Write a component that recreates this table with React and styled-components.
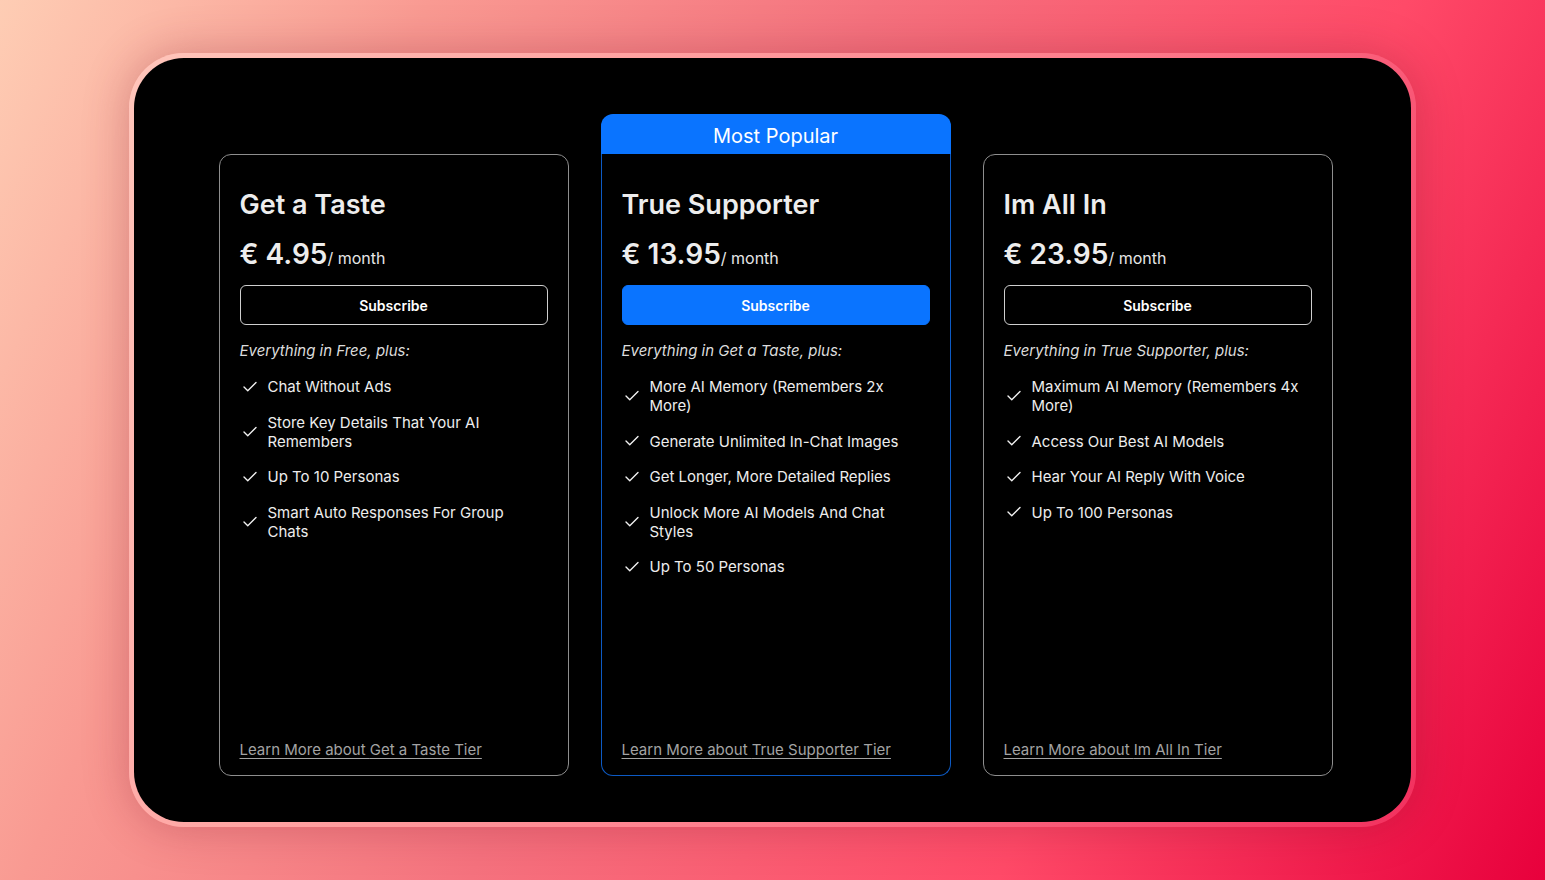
import React from "react";
import styled, { createGlobalStyle } from "styled-components";

const Global = createGlobalStyle`
  * { box-sizing: border-box; }
  html, body { margin: 0; padding: 0; }
  body {
    font-family: Inter, "Noto Sans", "Liberation Sans", sans-serif;
    -webkit-font-smoothing: antialiased;
  }
`;

const Page = styled.div`
  width: 100vw;
  height: 100vh;
  min-height: 880px;
  display: flex;
  align-items: center;
  justify-content: center;
  background: linear-gradient(115deg, #fecdb4 0%, #f99a92 22%, #f5727e 45%, #ff4a68 72%, #e8003c 100%);
  overflow: hidden;
`;

const Frame = styled.div`
  width: 1287px;
  height: 774px;
  padding: 5px;
  border-radius: 55px;
  background: linear-gradient(115deg, #ffc6bb 0%, #ffa3a2 30%, #ff7c8c 60%, #f2305e 100%);
  box-shadow: 0 0 46px rgba(130, 20, 40, 0.3);
`;

const Panel = styled.div`
  width: 100%;
  height: 100%;
  background: #000;
  border-radius: 50px;
  display: flex;
  justify-content: center;
  padding: 56px 0 46px 6px;
`;

const Grid = styled.div`
  display: grid;
  grid-template-columns: repeat(3, 350px);
  grid-template-rows: 40px 1fr;
  column-gap: 32px;
  height: 100%;
`;

const Badge = styled.div`
  grid-column: 2;
  grid-row: 1;
  background: #0a74ff;
  border-radius: 12px 12px 0 0;
  color: #fff;
  font-size: 20px;
  display: flex;
  align-items: center;
  justify-content: center;
  padding-top: 3px;
`;

const Card = styled.div`
  grid-row: 2;
  border: 1px solid ${(p) => (p.$popular ? "#0d5ac4" : "#8e8e8e")};
  border-top: ${(p) => (p.$popular ? "none" : "1px solid #8e8e8e")};
  border-radius: ${(p) => (p.$popular ? "0 0 12px 12px" : "12px")};
  padding: ${(p) => (p.$popular ? "34px" : "33px")} 20px 16px;
  display: flex;
  flex-direction: column;
  color: #f3f3f3;
`;

const Title = styled.h2`
  margin: 0;
  font-size: 27px;
  line-height: 34px;
  font-weight: 600;
  color: #ededed;
`;

const Price = styled.div`
  margin-top: 15px;
  line-height: 34px;
  display: flex;
  align-items: baseline;
`;

const Amount = styled.span`
  font-size: 28px;
  font-weight: 600;
  color: #ededed;
`;

const Per = styled.span`
  font-size: 16px;
  color: #e6e6e6;
`;

const Button = styled.button`
  margin-top: 10px;
  height: 40px;
  width: 100%;
  border-radius: 6px;
  border: 1px solid ${(p) => (p.$primary ? "#0a74ff" : "#cfcfcf")};
  background: ${(p) => (p.$primary ? "#0a74ff" : "#000")};
  color: #fff;
  font-family: inherit;
  font-size: 14px;
  font-weight: 600;
  cursor: pointer;
`;

const Lead = styled.p`
  margin: 16px 0 0;
  font-size: 15px;
  line-height: 19px;
  font-style: italic;
  color: #dcdcdc;
`;

const List = styled.ul`
  list-style: none;
  margin: 17px 0 0;
  padding: 0;
  display: flex;
  flex-direction: column;
  gap: 16.5px;
`;

const Item = styled.li`
  display: flex;
  align-items: center;
  gap: 9px;
  font-size: 15px;
  line-height: 19px;
  color: #ededed;
  padding-left: 1px;
`;

const Learn = styled.a`
  margin-top: auto;
  font-size: 15px;
  line-height: 19px;
  color: #a3a3a3;
  text-decoration: underline;
  text-underline-offset: 3px;
  text-decoration-thickness: 1px;
`;

const Check = () => (
  <svg width="18" height="18" viewBox="0 0 24 24" fill="none" stroke="#f2f2f2" strokeWidth="1.8" strokeLinecap="round" strokeLinejoin="round" style={{ flexShrink: 0 }}>
    <path d="M20 6 9 17l-5-5" />
  </svg>
);

const plans = [
  {
    name: "Get a Taste",
    price: "4.95",
    lead: "Everything in Free, plus:",
    items: ["Chat Without Ads", "Store Key Details That Your AI Remembers", "Up To 10 Personas", "Smart Auto Responses For Group Chats"],
  },
  {
    name: "True Supporter",
    price: "13.95",
    popular: true,
    lead: "Everything in Get a Taste, plus:",
    items: ["More AI Memory (Remembers 2x More)", "Generate Unlimited In-Chat Images", "Get Longer, More Detailed Replies", "Unlock More AI Models And Chat Styles", "Up To 50 Personas"],
  },
  {
    name: "Im All In",
    price: "23.95",
    lead: "Everything in True Supporter, plus:",
    items: ["Maximum AI Memory (Remembers 4x More)", "Access Our Best AI Models", "Hear Your AI Reply With Voice", "Up To 100 Personas"],
  },
];

export default function App() {
  return (
    <>
      <Global />
      <Page>
        <Frame>
          <Panel>
            <Grid>
              <Badge>Most Popular</Badge>
              {plans.map((p) => (
                <Card key={p.name} $popular={p.popular}>
                  <Title>{p.name}</Title>
                  <Price>
                    <Amount>€ {p.price}</Amount>
                    <Per>/ month</Per>
                  </Price>
                  <Button $primary={p.popular}>Subscribe</Button>
                  <Lead>{p.lead}</Lead>
                  <List>
                    {p.items.map((it) => (
                      <Item key={it}>
                        <Check />
                        <span>{it}</span>
                      </Item>
                    ))}
                  </List>
                  <Learn href="#">Learn More about {p.name} Tier</Learn>
                </Card>
              ))}
            </Grid>
          </Panel>
        </Frame>
      </Page>
    </>
  );
}
